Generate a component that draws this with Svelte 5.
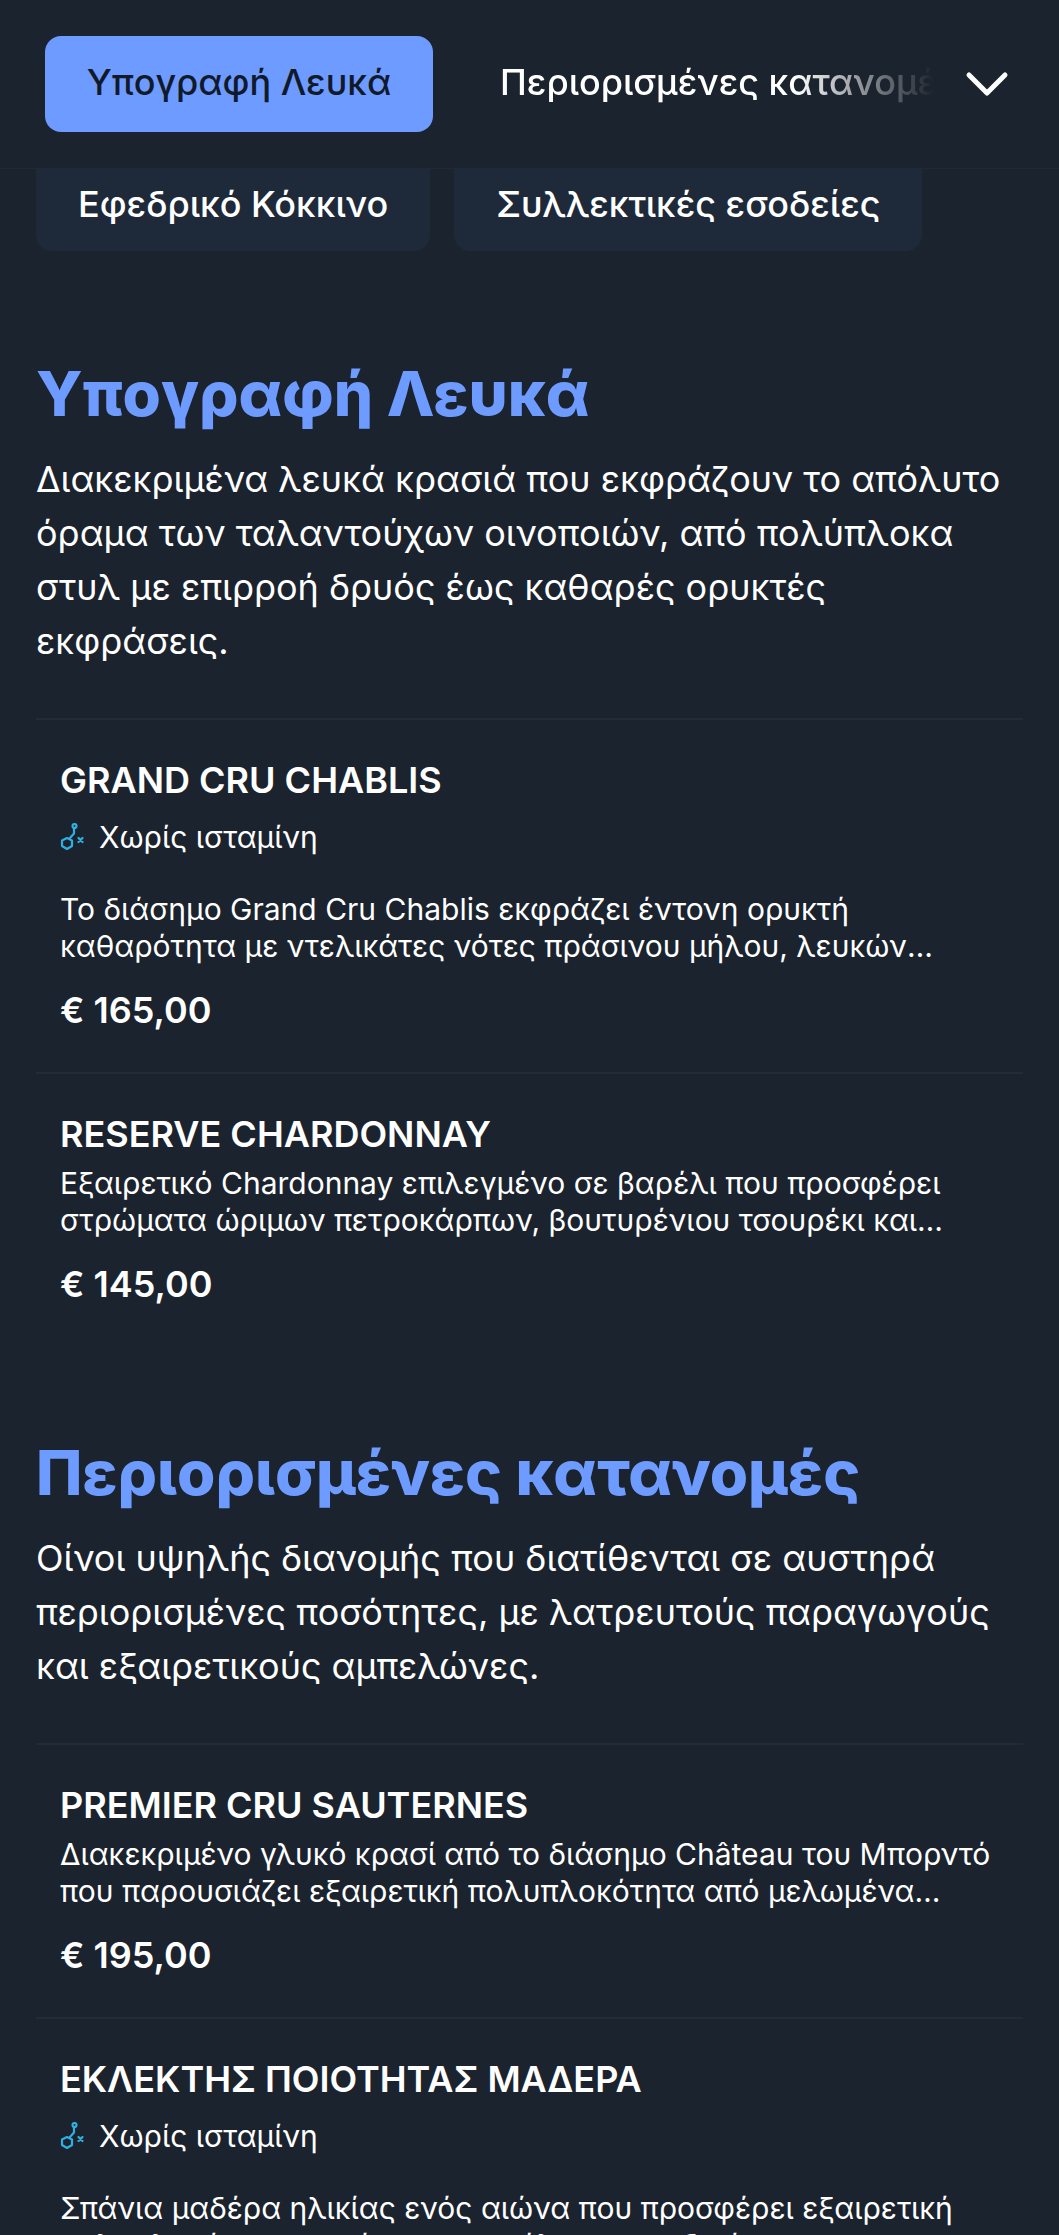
<script>
  const sections = [
    {
      title: 'Υπογραφή Λευκά',
      desc: 'Διακεκριμένα λευκά κρασιά που εκφράζουν το απόλυτο όραμα των ταλαντούχων οινοποιών, από πολύπλοκα στυλ με επιρροή δρυός έως καθαρές ορυκτές εκφράσεις.',
      items: [
        { name: 'GRAND CRU CHABLIS', free: true, text: 'Το διάσημο Grand Cru Chablis εκφράζει έντονη ορυκτή καθαρότητα με ντελικάτες νότες πράσινου μήλου, λευκών λουλουδιών και θαλασσινού αέρα που διαρκούν.', price: '€ 165,00' },
        { name: 'RESERVE CHARDONNAY', text: 'Εξαιρετικό Chardonnay επιλεγμένο σε βαρέλι που προσφέρει στρώματα ώριμων πετροκάρπων, βουτυρένιου τσουρέκι και φρυγανισμένης βανίλιας με μακρά επίγευση.', price: '€ 145,00' }
      ]
    },
    {
      title: 'Περιορισμένες κατανομές',
      desc: 'Οίνοι υψηλής διανομής που διατίθενται σε αυστηρά περιορισμένες ποσότητες, με λατρευτούς παραγωγούς και εξαιρετικούς αμπελώνες.',
      items: [
        { name: 'PREMIER CRU SAUTERNES', text: 'Διακεκριμένο γλυκό κρασί από το διάσημο Château του Μπορντό που παρουσιάζει εξαιρετική πολυπλοκότητα από μελωμένα βερίκοκα, σαφράν και καβουρδισμένα αμύγδαλα.', price: '€ 195,00' },
        { name: 'ΕΚΛΕΚΤΗΣ ΠΟΙΟΤΗΤΑΣ ΜΑΔΕΡΑ', free: true, text: 'Σπάνια μαδέρα ηλικίας ενός αιώνα που προσφέρει εξαιρετική πολυπλοκότητα με νότες καραμέλας, καρυδιού και εσπεριδοειδών που εξελίσσονται στο ποτήρι.', price: '€ 320,00' }
      ]
    }
  ];
</script>

<div class="page">
  <div class="nav">
    <div class="tab active">Υπογραφή Λευκά</div>
    <div class="tab-fade">Περιορισμένες κατανομές</div>
    <svg class="chevron" viewBox="0 0 44 28" fill="none" stroke="#fff" stroke-width="5" stroke-linecap="round" stroke-linejoin="round"><path d="M4 5 L22 23 L40 5"/></svg>
  </div>

  <div class="tabs">
    <div class="pill">Εφεδρικό Κόκκινο</div>
    <div class="pill">Συλλεκτικές εσοδείες</div>
  </div>

  {#each sections as section}
    <section>
      <h2>{section.title}</h2>
      <p class="desc">{section.desc}</p>
      {#each section.items as item}
        <div class="item">
          <h3>{item.name}</h3>
          {#if item.free}
            <div class="free">
              <svg viewBox="0 0 26 28" fill="none" stroke="#2fb0e0" stroke-width="2.2" stroke-linejoin="round" stroke-linecap="round">
                <path d="M7 15 L12 17.5 L12 23 L7 26 L2 23 L2 17.5 Z"/>
                <path d="M9.5 15.5 L14 10.5 L14 5"/>
                <circle cx="14.5" cy="3" r="2"/>
                <path d="M18.5 15 L22.5 19 M22.5 15 L18.5 19"/>
              </svg>
              <span>Χωρίς ισταμίνη</span>
            </div>
          {/if}
          <p class="text">{item.text}</p>
          <div class="price">{item.price}</div>
        </div>
      {/each}
    </section>
  {/each}
</div>

<style>
  :global(body) {
    margin: 0;
    background: #1b232e;
  }

  .page {
    position: relative;
    height: 2235px;
    overflow: hidden;
    background: #1b232e;
    color: #fff;
    font-family: Inter, "Noto Sans", sans-serif;
  }

  .nav {
    display: flex;
    align-items: center;
    height: 169px;
    padding: 0 50px 0 45px;
    box-sizing: border-box;
    border-bottom: 1px solid #202a36;
  }

  .tab {
    font-size: 36px;
    font-weight: 500;
    white-space: nowrap;
  }

  .active {
    flex: none;
    width: 388px;
    height: 96px;
    box-sizing: border-box;
    padding-bottom: 4px;
    display: flex;
    align-items: center;
    justify-content: center;
    background: #6e9bff;
    color: #111a2b;
    border-radius: 16px;
  }

  .tab-fade {
    flex: 1;
    margin-left: 67px;
    padding-bottom: 4px;
    font-size: 36px;
    font-weight: 500;
    white-space: nowrap;
    overflow: hidden;
    -webkit-mask-image: linear-gradient(90deg, #000 68%, transparent 100%);
    mask-image: linear-gradient(90deg, #000 68%, transparent 100%);
  }

  .chevron {
    flex: none;
    width: 44px;
    height: 28px;
    margin-left: 31px;
  }

  .tabs {
    display: flex;
    gap: 24px;
    padding: 0 36px;
    margin-top: -1px;
  }

  .pill {
    height: 83px;
    box-sizing: border-box;
    padding: 0 42px 12px;
    display: flex;
    align-items: center;
    background: #1e2a39;
    border-radius: 0 0 16px 16px;
    font-size: 36px;
    font-weight: 500;
  }

  section {
    padding: 0 36px;
    margin-bottom: 88px;
  }

  .tabs + section {
    margin-top: 104px;
  }

  h2 {
    margin: 0 0 19px;
    font-size: 62px;
    line-height: 78px;
    font-weight: 800;
    color: #6e9bff;
  }

  .desc {
    margin: 0 0 50px;
    font-size: 36px;
    line-height: 54px;
  }

  .item {
    border-top: 2px solid #202c38;
    padding: 38px 24px 40px;
  }

  h3 {
    margin: 0 0 9px;
    font-size: 36px;
    line-height: 44px;
    font-weight: 600;
  }

  .free {
    display: flex;
    align-items: center;
    gap: 13px;
    margin: 13px 0 32px;
    font-size: 30px;
    line-height: 44px;
  }

  .free svg {
    width: 26px;
    height: 28px;
  }

  .text {
    margin: 0;
    font-size: 30px;
    line-height: 37px;
    display: -webkit-box;
    -webkit-box-orient: vertical;
    -webkit-line-clamp: 2;
    line-clamp: 2;
    overflow: hidden;
  }

  .price {
    margin-top: 23px;
    font-size: 36px;
    line-height: 44px;
    font-weight: 600;
  }
</style>
